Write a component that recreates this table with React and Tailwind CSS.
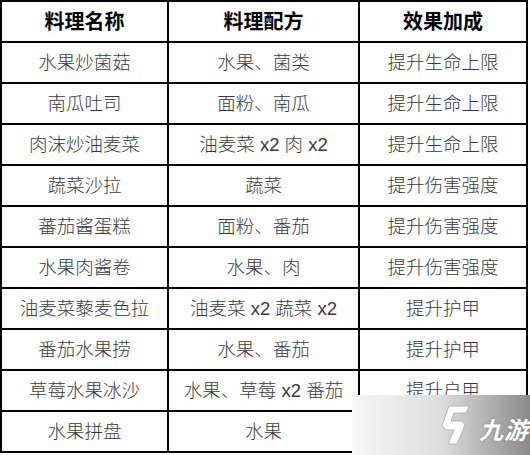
const rows = [
  ['水果炒菌菇', '水果、菌类', '提升生命上限'],
  ['南瓜吐司', '面粉、南瓜', '提升生命上限'],
  ['肉沫炒油麦菜', '油麦菜 x2 肉 x2', '提升生命上限'],
  ['蔬菜沙拉', '蔬菜', '提升伤害强度'],
  ['蕃茄酱蛋糕', '面粉、番茄', '提升伤害强度'],
  ['水果肉酱卷', '水果、肉', '提升伤害强度'],
  ['油麦菜藜麦色拉', '油麦菜 x2 蔬菜 x2', '提升护甲'],
  ['番茄水果捞', '水果、番茄', '提升护甲'],
  ['草莓水果冰沙', '水果、草莓 x2 番茄', '提升户甲'],
  ['水果拼盘', '水果', ''],
]

const cell = 'h-[41px] border-r-2 border-b-2 border-black flex items-center justify-center whitespace-nowrap'

function Mark() {
  return (
    <svg width="30" height="42" viewBox="0 0 30 42">
      <path
        d="M9 2 L29 2 L26 9 L14 9 L11 17 L22 17 L25 21 L17 40 L8 40 L14 26 L6 26 L2 21 Z"
        fill="#fff"
        stroke="#a0a0a0"
        strokeWidth="0.7"
      />
    </svg>
  )
}

export default function App() {
  return (
    <div className="relative w-[530px] h-[455px] bg-white overflow-hidden" style={{ fontFamily: '"Liberation Sans", "Noto Sans CJK SC", sans-serif' }}>
      <div className="w-[528px] border-l-2 border-t-2 border-black grid grid-cols-[167px_191px_168px]">
        <div className={`${cell} text-[20px] font-bold text-black`}>料理名称</div>
        <div className={`${cell} text-[20px] font-bold text-black`}>料理配方</div>
        <div className={`${cell} text-[20px] font-bold text-black`}>效果加成</div>
        {rows.map((r) => (
          <>
            <div key={r[0] + 'a'} className={`${cell} text-[18.5px] font-light text-[#3a3a3a]`}>{r[0]}</div>
            <div key={r[0] + 'b'} className={`${cell} text-[18.5px] font-light text-[#3a3a3a]`}>{r[1]}</div>
            <div key={r[0] + 'c'} className={`${cell} text-[18.5px] font-light text-[#3a3a3a]`}>{r[2]}</div>
          </>
        ))}
      </div>

      {/* watermark */}
      <div className="absolute left-[352px] top-[395px] w-[178px] h-[60px] bg-gradient-to-r from-[#f6f6f6] via-[#dedede] to-[#8a8a8a] flex items-center pl-[88px] gap-[9px]">
        <Mark />
        <span className="text-[24px] italic font-bold text-white mt-[12px] tracking-[1px]" style={{ textShadow: '0 0 2px #777' }}>九游</span>
      </div>
    </div>
  )
}
